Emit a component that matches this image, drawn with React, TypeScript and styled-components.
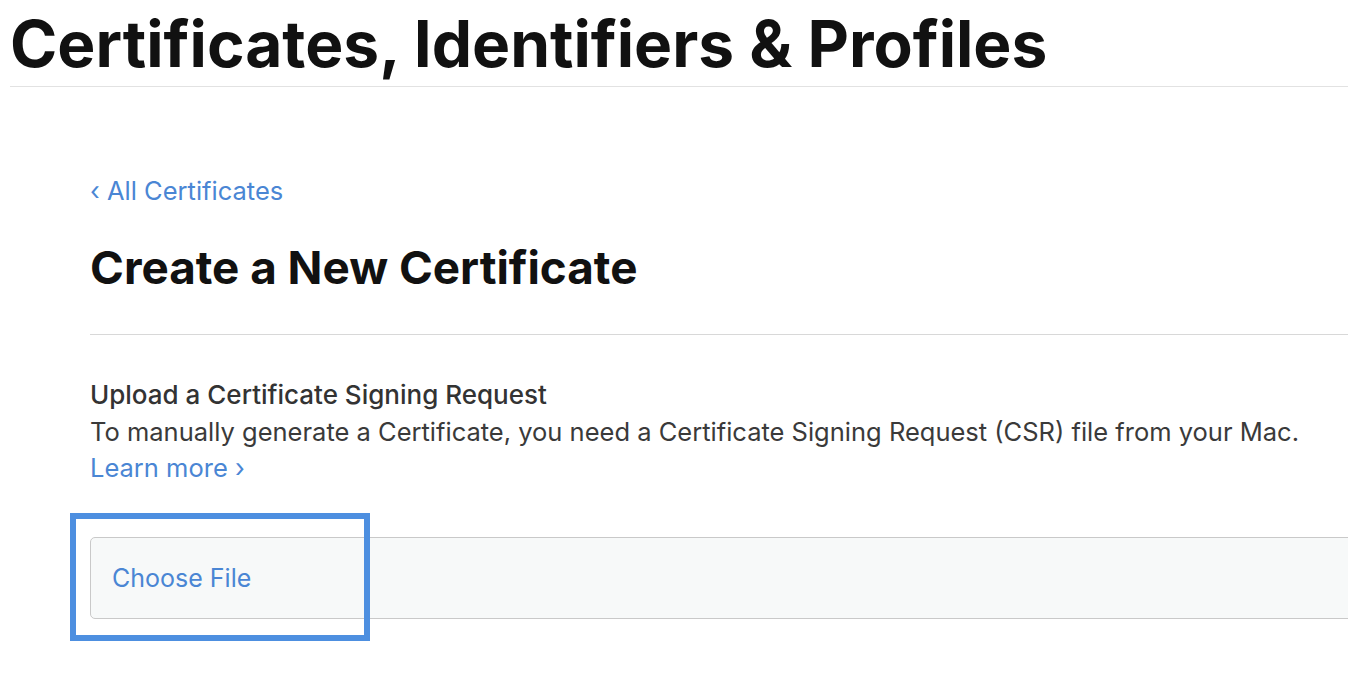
import styled, { createGlobalStyle } from "styled-components";

const GlobalStyle = createGlobalStyle`
    html {
        overflow: hidden;
    }
    html, body {
        margin: 0;
        padding: 0;
        background: #fff;
    }
    body {
        font-family: Inter, "Noto Sans", sans-serif;
        color: #111;
    }
`

const App = () => {
    return (
        <Page>
            <GlobalStyle/>
            <Header>
                <PageTitle>Certificates, Identifiers &amp; Profiles</PageTitle>
            </Header>
            <Content>
                <BackLink href="#">‹ All Certificates</BackLink>
                <SectionTitle>Create a New Certificate</SectionTitle>
                <Upload>
                    <UploadTitle>Upload a Certificate Signing Request</UploadTitle>
                    <UploadDesc>
                        To manually generate a Certificate, you need a Certificate Signing Request (CSR) file from your Mac.
                    </UploadDesc>
                    <TextLink href="#">Learn more ›</TextLink>
                </Upload>
                <FileField>
                    <ChooseFile>Choose File</ChooseFile>
                    <Highlight/>
                </FileField>
            </Content>
        </Page>
    );
};

export default App;

const Page = styled.div`
    width: 1500px;
    min-height: 674px;
    padding-left: 10px;
`

const Header = styled.header`
    border-bottom: 1px solid #e2e2e2;
    padding-top: 10px;
    padding-bottom: 8px;
`

const PageTitle = styled.h1`
    margin: 0;
    font-size: 64px;
    font-weight: 700;
    line-height: 68px;
    color: #111;
`

const Content = styled.main`
    margin-left: 80px;
    padding-top: 89px;
    padding-bottom: 40px;
`

const BackLink = styled.a`
    display: block;
    font-size: 25.5px;
    line-height: 30px;
    color: #4a86d4;
    text-decoration: none;
`

const SectionTitle = styled.h2`
    margin: 0;
    padding: 34px 0 38px;
    font-size: 45.8px;
    line-height: 56px;
    font-weight: 700;
    color: #111;
    border-bottom: 1px solid #d8d8d8;
`

const Upload = styled.section`
    display: flex;
    flex-direction: column;
    padding-top: 41px;
    font-size: 25.5px;
    line-height: 36px;
`

const UploadTitle = styled.h3`
    margin: 0;
    font-size: 26px;
    line-height: 38px;
    font-weight: 500;
    color: #333;
`

const UploadDesc = styled.p`
    margin: 0;
    color: #3a3a3a;
`

const TextLink = styled.a`
    color: #4a86d4;
    text-decoration: none;
    width: fit-content;
`

const FileField = styled.div`
    position: relative;
    margin-top: 51px;
    height: 80px;
    display: flex;
    align-items: center;
    padding-left: 21px;
    border: 1px solid #c9c9c9;
    border-radius: 5px;
    background: #f7f9f9;
`

const ChooseFile = styled.span`
    font-size: 25px;
    color: #4a86d4;
`

const Highlight = styled.div`
    position: absolute;
    left: -21px;
    top: -25px;
    width: 288px;
    height: 116px;
    border: 6px solid #4d8fe0;
    pointer-events: none;
`
